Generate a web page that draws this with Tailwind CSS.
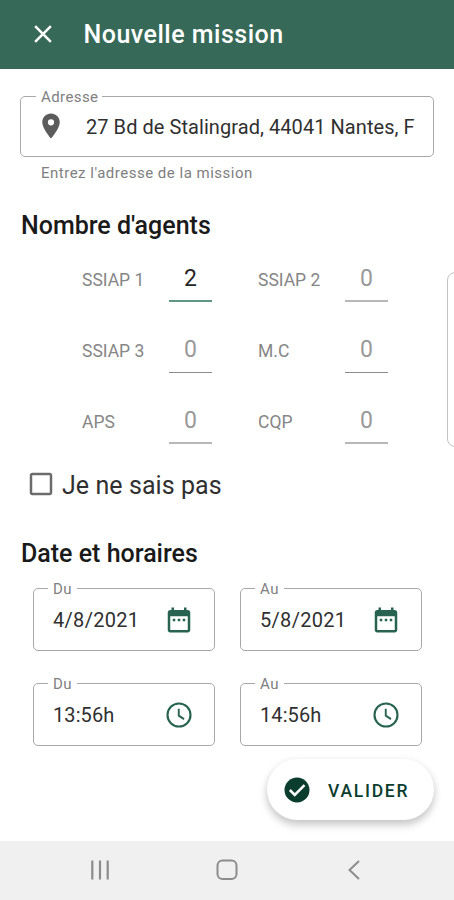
<!DOCTYPE html>
<html lang="fr">
<head>
  <meta charset="UTF-8" />
  <meta name="viewport" content="width=device-width, initial-scale=1.0" />
  <title>Nouvelle mission</title>
  <script src="https://cdn.jsdelivr.net/npm/@tailwindcss/browser@4"></script>
</head>
<body class="bg-white text-[#303030] font-[Roboto,sans-serif] h-[900px] flex flex-col overflow-hidden relative whitespace-nowrap">

  <!-- Header -->
  <header class="h-[68.5px] shrink-0 bg-[#376958] flex items-center pl-[28px] text-white">
    <svg class="w-[30px] h-[30px]" viewBox="0 0 24 24" fill="currentColor">
      <path d="M19 6.41 17.59 5 12 10.59 6.41 5 5 6.41 10.59 12 5 17.59 6.41 19 12 13.41 17.59 19 19 17.59 13.41 12z"/>
    </svg>
    <h1 class="ml-[25.5px] text-[25px] font-medium tracking-[0.5px]">Nouvelle mission</h1>
  </header>

  <main class="flex-grow flex flex-col">
    <!-- Adresse -->
    <fieldset class="mt-[19.5px] ml-5 w-[414px] h-[69px] border border-[#a8a8a8] rounded-[5px] px-[15px]">
      <legend class="pl-[5px] pr-1 h-4 leading-[18px] text-[15px] tracking-[0.4px] text-[#808080]">Adresse</legend>
      <div class="h-[44px] flex items-center">
        <svg class="w-[30px] h-[30px] text-[#5c5c5c]" viewBox="0 0 24 24" fill="currentColor">
          <path d="M12 2C8.13 2 5 5.13 5 9c0 5.25 7 13 7 13s7-7.75 7-13c0-3.87-3.13-7-7-7zm0 9.5a2.5 2.5 0 0 1 0-5 2.5 2.5 0 0 1 0 5z"/>
        </svg>
        <span class="ml-5 pt-px text-[20px] tracking-[0.06px]">27 Bd de Stalingrad, 44041 Nantes, F</span>
      </div>
    </fieldset>
    <p class="mt-[6px] ml-[41px] h-5 leading-5 text-[15px] tracking-[0.5px] text-[#808080]">Entrez l'adresse de la mission</p>

    <!-- Nombre d'agents -->
    <h2 class="mt-[27px] ml-[21px] h-[30px] leading-[32px] text-[25px] font-medium text-[#1a1a1a]">Nombre d'agents</h2>
    <div class="mt-[17px] h-[190px] flex overflow-hidden">
      <div class="w-[447px] shrink-0 pl-[82px] grid grid-cols-[87px_89px_87px_43px] auto-rows-[45px] gap-y-[26px] content-start text-[17.5px] leading-[46px] text-[#868686]">
        <span>SSIAP 1</span>
        <div class="w-[43px] border-b-2 border-[#5f9684] text-center text-[23px] leading-[44px] text-[#262626]">2</div>
        <span>SSIAP 2</span>
        <div class="w-[43px] border-b-2 border-[#b8b8b8] text-center text-[23px] leading-[44px] text-[#999]">0</div>

        <span>SSIAP 3</span>
        <div class="w-[43px] border-b border-[#8c8c8c] text-center text-[23px] leading-[44px] text-[#999]">0</div>
        <span>M.C</span>
        <div class="w-[43px] border-b border-[#8c8c8c] text-center text-[23px] leading-[44px] text-[#999]">0</div>

        <span>APS</span>
        <div class="w-[43px] border-b-2 border-[#b8b8b8] text-center text-[23px] leading-[44px] text-[#999]">0</div>
        <span>CQP</span>
        <div class="w-[43px] border-b-2 border-[#b8b8b8] text-center text-[23px] leading-[44px] text-[#999]">0</div>
      </div>
      <div class="w-40 shrink-0 h-[175px] mt-[15px] border border-[#c4c4c4] rounded-[8px]"></div>
    </div>

    <!-- Je ne sais pas -->
    <label class="mt-[22px] ml-[26px] h-[30px] flex items-center text-[25px] tracking-[0.07px]">
      <svg class="w-[30px] h-[30px] text-[#6b6b6b]" viewBox="0 0 24 24" fill="currentColor">
        <path d="M19 5v14H5V5h14m0-2H5c-1.1 0-2 .9-2 2v14c0 1.1.9 2 2 2h14c1.1 0 2-.9 2-2V5c0-1.1-.9-2-2-2z"/>
      </svg>
      <span class="ml-[6px] pt-[3px]">Je ne sais pas</span>
    </label>

    <!-- Date et horaires -->
    <h2 class="mt-[38px] ml-[21px] h-[30px] leading-[33px] text-[25px] font-medium text-[#1a1a1a]">Date et horaires</h2>
    <div class="mt-[13px] ml-[33px] grid grid-cols-[182px_182px] gap-x-[25px] gap-y-6 text-[20px] tracking-[0.3px]">
      <fieldset class="h-[71px] border border-[#a8a8a8] rounded-[5px] pl-[14px] pr-5">
        <legend class="px-[5px] h-4 leading-[19px] text-[15px] text-[#808080] tracking-[0.5px]">Du</legend>
        <div class="h-[47px] pl-[5px] flex items-center justify-between">
          <span>4/8/2021</span>
          <svg class="w-[30px] h-[30px] text-[#276350]" viewBox="0 0 24 24" fill="currentColor">
            <path d="M9 11H7v2h2v-2zm4 0h-2v2h2v-2zm4 0h-2v2h2v-2zm2-7h-1V2h-2v2H8V2H6v2H5c-1.1 0-2 .9-2 2v14c0 1.1.9 2 2 2h14c1.1 0 2-.9 2-2V6c0-1.1-.9-2-2-2zm0 16H5V9h14v11z"/>
          </svg>
        </div>
      </fieldset>
      <fieldset class="h-[71px] border border-[#a8a8a8] rounded-[5px] pl-[14px] pr-5">
        <legend class="px-[5px] h-4 leading-[19px] text-[15px] text-[#808080] tracking-[0.5px]">Au</legend>
        <div class="h-[47px] pl-[5px] flex items-center justify-between">
          <span>5/8/2021</span>
          <svg class="w-[30px] h-[30px] text-[#276350]" viewBox="0 0 24 24" fill="currentColor">
            <path d="M9 11H7v2h2v-2zm4 0h-2v2h2v-2zm4 0h-2v2h2v-2zm2-7h-1V2h-2v2H8V2H6v2H5c-1.1 0-2 .9-2 2v14c0 1.1.9 2 2 2h14c1.1 0 2-.9 2-2V6c0-1.1-.9-2-2-2zm0 16H5V9h14v11z"/>
          </svg>
        </div>
      </fieldset>
      <fieldset class="h-[71px] border border-[#a8a8a8] rounded-[5px] pl-[14px] pr-5">
        <legend class="px-[5px] h-4 leading-[19px] text-[15px] text-[#808080] tracking-[0.5px]">Du</legend>
        <div class="h-[47px] pl-[5px] flex items-center justify-between">
          <span class="tracking-[0.1px]">13:56h</span>
          <svg class="w-[30px] h-[30px] text-[#276350]" viewBox="0 0 24 24" fill="none" stroke="currentColor">
            <circle cx="12" cy="12" r="9.2" stroke-width="1.7"/>
            <path d="M11.8 7v5.5l4.2 2.8" stroke-width="1.5"/>
          </svg>
        </div>
      </fieldset>
      <fieldset class="h-[71px] border border-[#a8a8a8] rounded-[5px] pl-[14px] pr-5">
        <legend class="px-[5px] h-4 leading-[19px] text-[15px] text-[#808080] tracking-[0.5px]">Au</legend>
        <div class="h-[47px] pl-[5px] flex items-center justify-between">
          <span class="tracking-[0.1px]">14:56h</span>
          <svg class="w-[30px] h-[30px] text-[#276350]" viewBox="0 0 24 24" fill="none" stroke="currentColor">
            <circle cx="12" cy="12" r="9.2" stroke-width="1.7"/>
            <path d="M11.8 7v5.5l4.2 2.8" stroke-width="1.5"/>
          </svg>
        </div>
      </fieldset>
    </div>
  </main>

  <!-- Bouton flottant -->
  <button class="absolute right-5 bottom-[80px] w-[167px] h-[61px] rounded-full bg-white shadow-[0_5px_8px_rgba(0,0,0,0.2),0_1px_8px_rgba(0,0,0,0.05)] flex items-center pl-[15px] text-[#0b3d2e]">
    <svg class="w-[30px] h-[30px]" viewBox="0 0 24 24">
      <circle cx="12" cy="12" r="10" fill="currentColor"/>
      <path d="m6.3 12 3.9 3.9 7.8-7.8" fill="none" stroke="#fff" stroke-width="2"/>
    </svg>
    <span class="ml-4 pt-[3px] text-[17.5px] font-medium tracking-[1.75px]">VALIDER</span>
  </button>

  <!-- Barre de navigation -->
  <nav class="h-[59.5px] shrink-0 bg-[#f0f0f0] flex items-center pl-[90px] text-[#8c8c8c]">
    <svg class="w-5 h-5" viewBox="0 0 20 20" stroke="currentColor" stroke-width="2.2">
      <path d="M2.3 .5v19M10 .5v19M17.7 .5v19"/>
    </svg>
    <svg class="ml-[106px] w-[22px] h-[22px]" viewBox="0 0 22 22" fill="none" stroke="currentColor" stroke-width="2">
      <rect x="1.5" y="1.5" width="19" height="18.5" rx="5"/>
    </svg>
    <svg class="ml-[110px] w-3 h-5" viewBox="0 0 12 20" fill="none" stroke="currentColor" stroke-width="2">
      <path d="M11 1 1.5 10 11 19"/>
    </svg>
  </nav>
</body>
</html>
